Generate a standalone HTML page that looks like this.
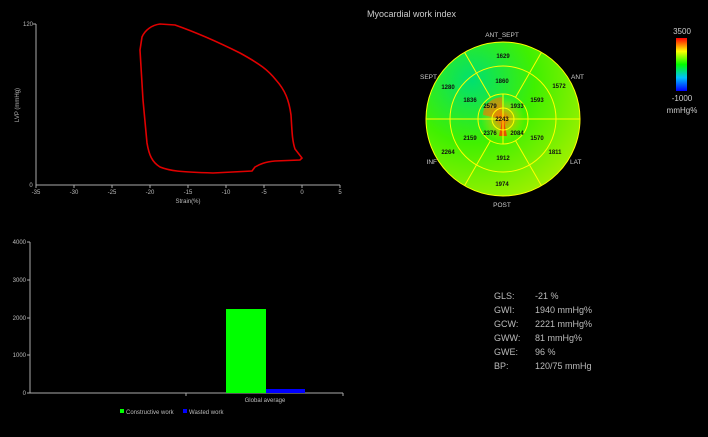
<!DOCTYPE html>
<html><head><style>
html,body{margin:0;padding:0;background:#000;width:708px;height:437px;overflow:hidden}
svg{display:block;font-family:"Liberation Sans",sans-serif}
</style></head><body>
<svg width="708" height="437" viewBox="0 0 708 437">
<defs>
<radialGradient id="bg" cx="0.3" cy="0.25" r="0.9">
<stop offset="0" stop-color="#00e070"/>
<stop offset="0.45" stop-color="#40f000"/>
<stop offset="1" stop-color="#b0f000"/>
</radialGradient>
<radialGradient id="apx" cx="0.5" cy="0.5" r="0.5">
<stop offset="0" stop-color="#ff6000"/>
<stop offset="0.5" stop-color="#ffb000" stop-opacity="0.5"/>
<stop offset="1" stop-color="#d0f000" stop-opacity="0"/>
</radialGradient>
<linearGradient id="cb" x1="0" y1="0" x2="0" y2="1">
<stop offset="0" stop-color="#ff0000"/>
<stop offset="0.25" stop-color="#ffff00"/>
<stop offset="0.5" stop-color="#00ff00"/>
<stop offset="0.75" stop-color="#00c0ff"/>
<stop offset="1" stop-color="#0000ff"/>
</linearGradient>
</defs>
<!-- top chart -->
<g stroke="#aaa" stroke-width="1" fill="none">
<line x1="36" y1="24" x2="36" y2="185"/>
<line x1="36" y1="185" x2="340" y2="185"/>
<line x1="33" y1="24" x2="36" y2="24"/>
<line x1="36" y1="185" x2="36" y2="188"/><line x1="74" y1="185" x2="74" y2="188"/><line x1="112" y1="185" x2="112" y2="188"/><line x1="150" y1="185" x2="150" y2="188"/><line x1="188" y1="185" x2="188" y2="188"/><line x1="226" y1="185" x2="226" y2="188"/><line x1="264" y1="185" x2="264" y2="188"/><line x1="302" y1="185" x2="302" y2="188"/><line x1="340" y1="185" x2="340" y2="188"/>
</g>
<g fill="#bbb" font-size="6" text-anchor="middle">
<text x="28" y="26">120</text><text x="31" y="187">0</text>
<text x="36" y="194">-35</text><text x="74" y="194">-30</text><text x="112" y="194">-25</text><text x="150" y="194">-20</text><text x="188" y="194">-15</text><text x="226" y="194">-10</text><text x="264" y="194">-5</text><text x="302" y="194">0</text><text x="340" y="194">5</text>
<text x="188" y="203">Strain(%)</text>
<text transform="translate(19,105) rotate(-90)">LVP (mmHg)</text>
</g>
<path d="M160,24 C152,25 145,30 142,37 L140,50 L143,100 L147,143 C149,155 152,162 160,167 C170,171 180,172 213,173 L252,171 L255,167 C260,164 265,162 275,161 L300,160 L302,158 L295,149 C292,140 292,130 291,115 C289,100 285,90 276,80 C268,70 260,64 240,53 C220,43 195,32 175,25 Z" fill="none" stroke="#e00000" stroke-width="1.6"/>
<!-- title -->
<text x="367" y="17" fill="#ccc" font-size="9">Myocardial work index</text>
<!-- bullseye -->
<g transform="translate(503,119)">
<circle r="77" fill="url(#bg)"/>
<circle r="22" fill="url(#apx)"/>
<path d="M-1,-22 L-1,0 L-20,-4 C-20,-14 -12,-21 -1,-22 Z" fill="#ff7000" opacity="0.6"/>
<path d="M0,-3 L-4,17 L4,17 Z" fill="#ff3000" opacity="0.8"/>
<g stroke="#ffff00" stroke-width="1" fill="none">
<circle r="77"/><circle r="53"/><circle r="25"/><circle r="11"/>
<line x1="-77" y1="0" x2="77" y2="0"/>
<line x1="0" y1="-25" x2="0" y2="25"/>
<line x1="-12.5" y1="-21.6" x2="-38.5" y2="-66.7"/><line x1="12.5" y1="-21.6" x2="38.5" y2="-66.7"/>
<line x1="-12.5" y1="21.6" x2="-38.5" y2="66.7"/><line x1="12.5" y1="21.6" x2="38.5" y2="66.7"/>
</g>
<g font-size="6.5" fill="#ccc">
<text x="-1" y="-82" text-anchor="middle">ANT_SEPT</text>
<text x="-66" y="-40" text-anchor="end">SEPT</text>
<text x="68" y="-40">ANT</text>
<text x="-66" y="45" text-anchor="end">INF</text>
<text x="67" y="45">LAT</text>
<text x="-1" y="88" text-anchor="middle">POST</text>
</g>
<g font-size="6" fill="#111" text-anchor="middle" font-weight="bold">
<text x="0" y="-61">1629</text><text x="-55" y="-30">1280</text><text x="56" y="-31">1572</text>
<text x="-55" y="35">2264</text><text x="52" y="35">1811</text><text x="-1" y="67">1974</text>
<text x="-1" y="-36">1860</text><text x="-33" y="-17">1836</text><text x="34" y="-17">1593</text>
<text x="-33" y="21">2159</text><text x="34" y="21">1570</text><text x="0" y="41">1912</text>
<text x="-13" y="-11">2579</text><text x="14" y="-11">1933</text>
<text x="-13" y="16">2376</text><text x="14" y="16">2084</text>
<text x="-1" y="2">2243</text>
</g>
</g>
<!-- colorbar -->
<rect x="676" y="38" width="11" height="53" fill="url(#cb)"/>
<g fill="#ccc" font-size="8" text-anchor="middle">
<text x="682" y="34">3500</text><text x="682" y="101">-1000</text><text x="682" y="113">mmHg%</text>
</g>
<!-- stats -->
<g fill="#bbb" font-size="9">
<text x="494" y="299">GLS:</text><text x="535" y="299">-21 %</text>
<text x="494" y="313">GWI:</text><text x="535" y="313">1940 mmHg%</text>
<text x="494" y="327">GCW:</text><text x="535" y="327">2221 mmHg%</text>
<text x="494" y="341">GWW:</text><text x="535" y="341">81 mmHg%</text>
<text x="494" y="355">GWE:</text><text x="535" y="355">96 %</text>
<text x="494" y="369">BP:</text><text x="535" y="369">120/75 mmHg</text>
</g>
<!-- bottom chart -->
<g stroke="#aaa" stroke-width="1" fill="none">
<line x1="30" y1="242" x2="30" y2="393"/>
<line x1="30" y1="393" x2="343" y2="393"/>
<line x1="27" y1="242" x2="30" y2="242"/><line x1="27" y1="280" x2="30" y2="280"/><line x1="27" y1="318" x2="30" y2="318"/><line x1="27" y1="355" x2="30" y2="355"/><line x1="27" y1="393" x2="30" y2="393"/>
<line x1="186" y1="393" x2="186" y2="396"/><line x1="343" y1="393" x2="343" y2="396"/>
</g>
<rect x="226" y="309" width="40" height="84" fill="#00ff00"/>
<rect x="266" y="389" width="39" height="4" fill="#0000ff"/>
<g fill="#bbb" font-size="6" text-anchor="end">
<text x="26" y="244">4000</text><text x="26" y="282">3000</text><text x="26" y="320">2000</text><text x="26" y="357">1000</text><text x="26" y="395">0</text>
</g>
<text x="265" y="402" fill="#bbb" font-size="6" text-anchor="middle">Global average</text>
<rect x="120" y="409" width="4" height="4" fill="#00ff00"/>
<text x="126" y="414" fill="#bbb" font-size="6">Constructive work</text>
<rect x="183" y="409" width="4" height="4" fill="#0000ff"/>
<text x="189" y="414" fill="#bbb" font-size="6">Wasted work</text>
</svg>
</body></html>
